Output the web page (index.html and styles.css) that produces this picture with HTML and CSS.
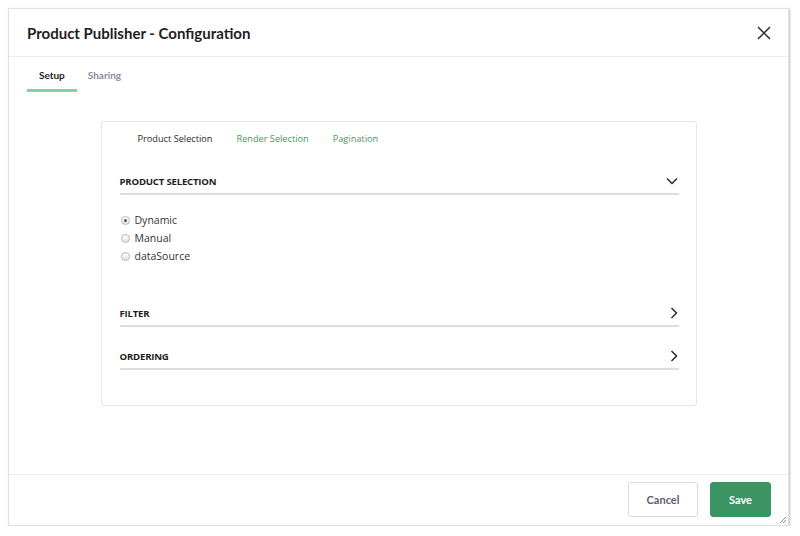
FILE: index.html
```html
<!DOCTYPE html>
<html>
<head>
<meta charset="utf-8">
<link rel="stylesheet" href="styles.css">
</head>
<body>
<div class="dialog">
  <header class="dlg-head">
    <h1 class="title">Product Publisher - Configuration</h1>
    <button class="close" aria-label="Close">
      <svg width="14" height="14" viewBox="0 0 14 14"><path d="M1 1L13 13M13 1L1 13" stroke="#2b2b2b" stroke-width="1.5" fill="none"/></svg>
    </button>
  </header>
  <nav class="tabs">
    <span class="tab active">Setup</span>
    <span class="tab">Sharing</span>
  </nav>
  <main class="dlg-body">
    <section class="card">
      <div class="subtabs">
        <span class="subtab current">Product Selection</span>
        <span class="subtab">Render Selection</span>
        <span class="subtab">Pagination</span>
      </div>
      <div class="sec sec-first">
        <span class="sec-title">PRODUCT SELECTION</span>
        <svg class="chev" width="12" height="8" viewBox="0 0 12 8"><path d="M1 1.5L6 6.5L11 1.5" stroke="#2b2b2b" stroke-width="1.5" fill="none"/></svg>
      </div>
      <div class="radios">
        <label class="radio"><span class="dot checked"></span>Dynamic</label>
        <label class="radio"><span class="dot"></span>Manual</label>
        <label class="radio"><span class="dot"></span>dataSource</label>
      </div>
      <div class="sec sec-filter">
        <span class="sec-title">FILTER</span>
        <svg class="chev" width="8" height="12" viewBox="0 0 8 12"><path d="M1.5 1L6.5 6L1.5 11" stroke="#2b2b2b" stroke-width="1.5" fill="none"/></svg>
      </div>
      <div class="sec sec-order">
        <span class="sec-title">ORDERING</span>
        <svg class="chev" width="8" height="12" viewBox="0 0 8 12"><path d="M1.5 1L6.5 6L1.5 11" stroke="#2b2b2b" stroke-width="1.5" fill="none"/></svg>
      </div>
    </section>
  </main>
  <footer class="dlg-foot">
    <button class="btn cancel">Cancel</button>
    <button class="btn save">Save</button>
  </footer>
  <svg class="grip" width="8" height="8" viewBox="0 0 8 8"><path d="M7 1L1 7M7 4L4 7" stroke="#8a8a8a" stroke-width="1" fill="none"/></svg>
</div>
</body>
</html>
```

FILE: styles.css
```css
* { box-sizing: border-box; }
html, body { margin: 0; padding: 0; background: #fff; }
body { font-family: "Open Sans", "Noto Sans", sans-serif; color: #222; }

.dialog {
  position: relative;
  margin: 8px 0 0 8px;
  width: 781px;
  height: 518px;
  border: 1px solid #e1e1e1;
  box-shadow: 1px 1px 2px rgba(0,0,0,0.25);
  display: flex;
  flex-direction: column;
  background: #fff;
}

.dlg-head {
  height: 48px;
  flex: none;
  display: flex;
  align-items: center;
  justify-content: space-between;
  padding: 0 17px 0 18px;
  border-bottom: 1px solid #ececec;
}
.title {
  margin: 0;
  font-family: "Lato", sans-serif;
  font-weight: 700;
  font-size: 15px;
  color: #1e1e1e;
}
.close {
  border: 0;
  background: none;
  padding: 0;
  width: 14px;
  height: 14px;
  display: flex;
}

.tabs {
  flex: none;
  display: flex;
  padding-left: 18px;
}
.tab {
  font-family: "Lato", sans-serif;
  font-weight: 700;
  font-size: 10px;
  line-height: 14px;
  padding: 11px 11px 7px;
  border-bottom: 3px solid transparent;
  color: #8a8b9c;
}
.tab.active {
  color: #1e1e1e;
  border-bottom-color: #7fd4a2;
  padding-left: 12px;
  padding-right: 12px;
}

.dlg-body {
  flex: 1;
  padding-top: 29px;
}

.card {
  width: 596px;
  margin: 0 auto;
  border: 1px solid #e6e6e6;
  border-radius: 3px;
  padding: 10px 17px 35px 18px;
}

.subtabs {
  display: flex;
  gap: 24px;
  padding-left: 18px;
  font-size: 9.2px;
  line-height: 14px;
}
.subtab { color: #3a9b5f; }
.subtab.current { color: #2a2a2a; }

.sec {
  display: flex;
  justify-content: space-between;
  align-items: center;
  height: 26px;
  border-bottom: 2px solid #dcdce4;
}
.sec-title {
  font-size: 9.6px;
  font-weight: 700;
  letter-spacing: -0.2px;
  color: #1e1e1e;
}
.chev { margin-right: 1px; }
.sec-first { margin-top: 23px; }
.sec-filter { margin-top: 36px; }
.sec-order { margin-top: 17px; }

.radios {
  margin-top: 16px;
  display: flex;
  flex-direction: column;
}
.radio {
  display: flex;
  align-items: center;
  height: 18px;
  font-size: 10.5px;
  color: #333;
  padding-left: 1px;
}
.dot {
  width: 9px;
  height: 9px;
  border-radius: 50%;
  border: 1px solid #b8b8b8;
  background: linear-gradient(#fdfdfd, #e4e4e4);
  margin-right: 5px;
  position: relative;
}
.dot.checked::after {
  content: "";
  position: absolute;
  left: 2px;
  top: 2px;
  width: 3px;
  height: 3px;
  border-radius: 50%;
  background: #555;
}

.dlg-foot {
  flex: none;
  height: 51px;
  border-top: 1px solid #ececec;
  display: flex;
  justify-content: flex-end;
  align-items: flex-start;
  gap: 12px;
  padding: 7px 17px 0 0;
}
.btn {
  height: 35px;
  border-radius: 3px;
  font-family: "Lato", sans-serif;
  font-weight: 700;
  font-size: 11px;
  cursor: pointer;
}
.cancel {
  width: 70px;
  background: #fff;
  border: 1px solid #d9d9de;
  color: #5c5e6e;
}
.save {
  width: 61px;
  background: #3b9462;
  border: 1px solid #3b9462;
  color: #fff;
}

.grip {
  position: absolute;
  right: 1px;
  bottom: 1px;
}
```
